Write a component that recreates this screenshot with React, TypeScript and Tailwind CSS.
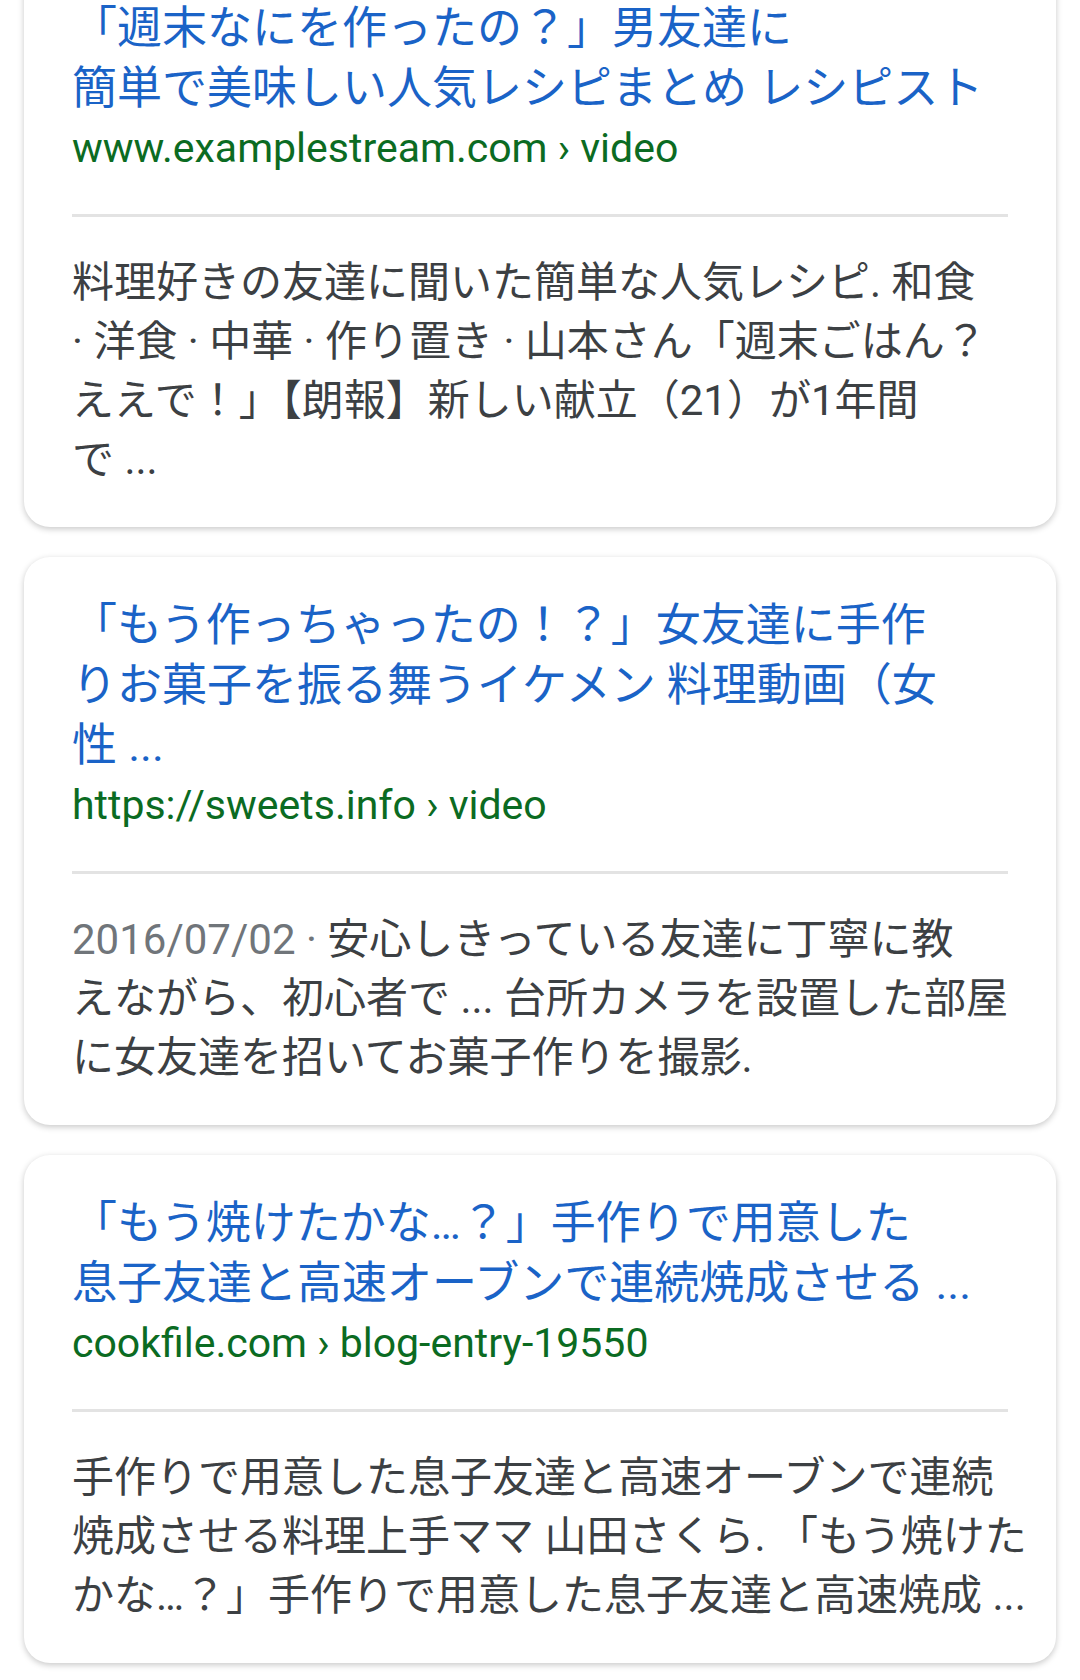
type Result = {
  title: string[];
  url: string;
  path: string;
  date?: string;
  snippet: string[];
  lift?: boolean;
};

const results: Result[] = [
  {
    title: ["「週末なにを作ったの？」男友達に", "簡単で美味しい人気レシピまとめ レシピスト"],
    url: "www.examplestream.com",
    path: "video",
    snippet: [
      "料理好きの友達に聞いた簡単な人気レシピ. 和食",
      "· 洋食 · 中華 · 作り置き · 山本さん「週末ごはん？",
      "ええで！」【朗報】新しい献立（21）が1年間",
      "で ...",
    ],
    lift: true,
  },
  {
    title: ["「もう作っちゃったの！？」女友達に手作", "りお菓子を振る舞うイケメン 料理動画（女", "性 ..."],
    url: "https://sweets.info",
    path: "video",
    date: "2016/07/02",
    snippet: [
      "安心しきっている友達に丁寧に教",
      "えながら、初心者で ... 台所カメラを設置した部屋",
      "に女友達を招いてお菓子作りを撮影.",
    ],
  },
  {
    title: ["「もう焼けたかな…？」手作りで用意した", "息子友達と高速オーブンで連続焼成させる ..."],
    url: "cookfile.com",
    path: "blog-entry-19550",
    snippet: [
      "手作りで用意した息子友達と高速オーブンで連続",
      "焼成させる料理上手ママ 山田さくら. 「もう焼けた",
      "かな…？」手作りで用意した息子友達と高速焼成 ...",
    ],
  },
];

const font = { fontFamily: 'Roboto, "Noto Sans CJK JP", sans-serif' };

function ResultCard({ r }: { r: Result }) {
  return (
    <div
      className={`bg-white rounded-[26px] shadow-[0_2px_6px_rgba(0,0,0,0.22)] px-[48px] pt-[39px] pb-[38px] ${
        r.lift ? "-mt-[40px]" : ""
      }`}
    >
      <h3 className="text-[45px] leading-[60px] text-[#1a63c7] font-normal">
        {r.title.map((line, i) => (
          <span key={i} className="block whitespace-nowrap">
            {line}
          </span>
        ))}
      </h3>
      <div className="text-[41px] leading-[58px] text-[#0b6b22] whitespace-nowrap">
        {r.url} › {r.path}
      </div>
      <div className="mt-[37px] h-[3px] bg-[#e3e3e3]" />
      <p className="mt-[36px] text-[42px] leading-[59px] text-[#3c4043]">
        {r.snippet.map((line, i) => (
          <span key={i} className="block whitespace-nowrap">
            {i === 0 && r.date ? <span className="text-[#70757a]">{r.date} · </span> : null}
            {line}
          </span>
        ))}
      </p>
    </div>
  );
}

export default function App() {
  return (
    <div className="min-h-[1680px] bg-white overflow-hidden px-6" style={font}>
      <div className="flex flex-col gap-[30px]">
        {results.map((r, i) => (
          <ResultCard key={i} r={r} />
        ))}
      </div>
    </div>
  );
}
